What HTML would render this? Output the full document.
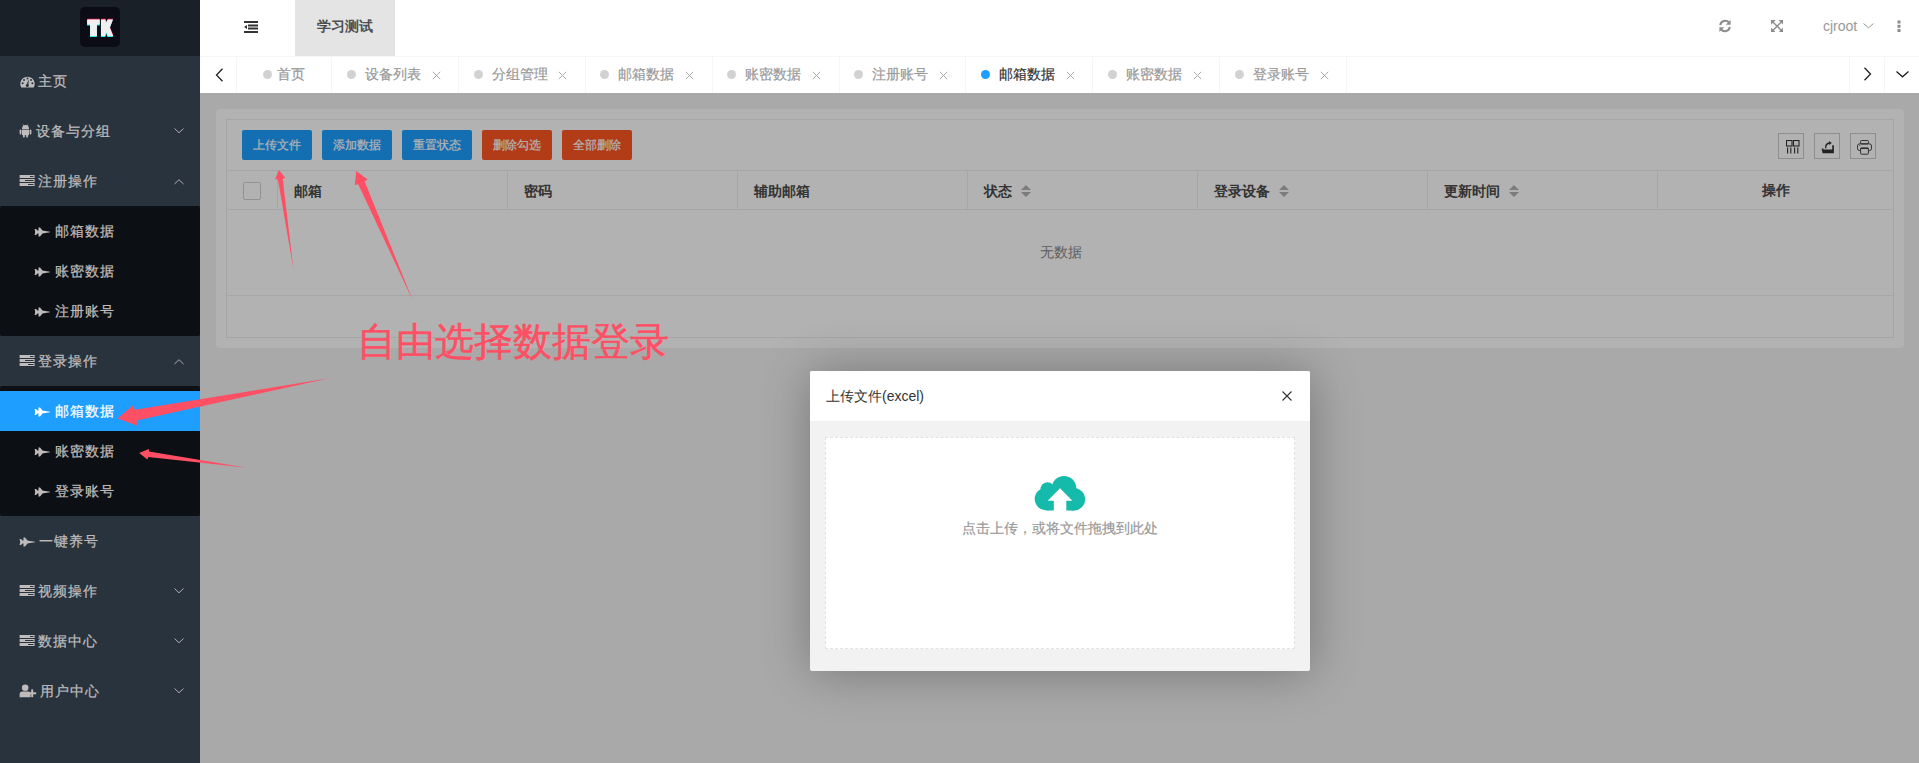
<!DOCTYPE html>
<html><head><meta charset="utf-8">
<style>
*{margin:0;padding:0;box-sizing:border-box}
html,body{width:1919px;height:763px;overflow:hidden;background:#f2f2f2;font-family:"Liberation Sans",sans-serif;font-size:14px;color:#333}
body div{-webkit-text-stroke:0.2px currentColor}
.abs{position:absolute;display:block}
#side{position:absolute;left:0;top:0;width:200px;height:763px;background:#28333E}
#logo{position:absolute;left:0;top:0;width:200px;height:56px;background:#192027}
.mi{position:absolute;left:0;width:200px;height:50px;line-height:50px;color:#bfbbbb;font-size:14px}
.mi span{-webkit-text-stroke:0.25px currentColor;letter-spacing:1px;position:absolute;left:38px;top:0}
.sub{position:absolute;left:0;width:200px;background:#0c0f13;border-radius:2px}
.si{position:absolute;left:0;width:200px;height:40px;line-height:40px;color:#bfbbbb}
.si span{-webkit-text-stroke:0.25px currentColor;letter-spacing:1px;position:absolute;left:54.5px;top:0}
.si.act{background:#1E9FFF;color:#fff}
#header{position:absolute;left:200px;top:0;width:1719px;height:56px;background:#fff}
#tabbar{position:absolute;left:200px;top:56px;width:1719px;height:37px;background:#fff;border-top:1px solid #f6f6f6}
.sep{position:absolute;top:0;width:1px;height:36px;background:#f6f6f6}
.tab{position:absolute;top:0;height:36px;line-height:36px;color:#999;white-space:nowrap}
.tab .dot{position:absolute;top:13px;left:0;width:9px;height:9px;border-radius:50%;background:#d2d2d2}
.tab .tx{position:absolute;top:-1px;left:18px}
#body{position:absolute;left:200px;top:93px;width:1719px;height:670px;background:#f2f2f2}
#card{position:absolute;left:15px;top:15px;width:1689px;height:240px;background:#fff;border-radius:4px}
#tbl{position:absolute;left:26px;top:27px;width:1668px;height:218px;border:1px solid #eee}
.btn{position:absolute;height:30px;width:70px;line-height:30px;text-align:center;color:#fff;font-size:12px;border-radius:2px;background:#1E9FFF}
.btn.red{background:#FF5722}
.tool{position:absolute;width:26px;height:26px;border:1px solid #ccc}
.th{position:absolute;top:50px;height:39px;line-height:39px;border-left:1px solid #eee;font-weight:bold;color:#333;white-space:nowrap}
#shade{position:absolute;left:200px;top:93px;width:1719px;height:670px;background:rgba(0,0,0,0.3)}
#modal{position:absolute;left:810px;top:371px;width:500px;height:300px;background:#f2f2f2;border-radius:2px;box-shadow:1px 1px 50px rgba(0,0,0,.3);overflow:hidden}
#mtitle{-webkit-text-stroke:0 !important;position:absolute;left:0;top:0;width:500px;height:51px;line-height:50px;background:#fff;padding-left:16px;color:#333;border-bottom:1px solid #f0f0f0}
#drag{position:absolute;left:15px;top:66px;width:470px;height:212px;background:#fff;border:1px dashed #e2e2e2}
</style></head><body>
<div id="side">
<div id="logo"><svg class="abs" style="left:0;top:0" width="200" height="56" viewBox="0 0 200 56"><rect x="80" y="7" width="40" height="40" rx="5" fill="#0b0c16"/><g transform="translate(0.2,-0.3)" fill="#fe2c55"><polygon points="87.15,19.15 99.7,19.15 99.7,24.3 96.9,24.3 96.9,35.8 90.1,35.8 90.1,24.3 87.15,24.3"/><polygon points="101,19.15 105.4,19.15 106.1,22.3 107.6,19.15 112.9,19.15 109.8,27.2 113.2,35.8 107.6,35.8 106.1,31.8 105.4,35.8 101,35.8"/></g><g transform="translate(-0.1,1.1)" fill="#25f4ee"><polygon points="87.15,19.15 99.7,19.15 99.7,24.3 96.9,24.3 96.9,35.8 90.1,35.8 90.1,24.3 87.15,24.3"/><polygon points="101,19.15 105.4,19.15 106.1,22.3 107.6,19.15 112.9,19.15 109.8,27.2 113.2,35.8 107.6,35.8 106.1,31.8 105.4,35.8 101,35.8"/></g><g transform="translate(0,0.3)" fill="#efefef"><polygon points="87.15,19.15 99.7,19.15 99.7,24.3 96.9,24.3 96.9,35.8 90.1,35.8 90.1,24.3 87.15,24.3"/><polygon points="101,19.15 105.4,19.15 106.1,22.3 107.6,19.15 112.9,19.15 109.8,27.2 113.2,35.8 107.6,35.8 106.1,31.8 105.4,35.8 101,35.8"/></g></svg></div>
<div class="mi" style="top:56px"><span>主页</span></div><svg class="abs" style="left:20px;top:76px" width="15" height="12" viewBox="0 0 15 12"><path d="M1.3 11.5 A7.2 7.2 0 1 1 13.7 11.5 Z" fill="#bfbbbb"/><circle cx="7.5" cy="2.6" r="1" fill="#28333E"/><circle cx="4" cy="4" r="1" fill="#28333E"/><circle cx="11" cy="4" r="1" fill="#28333E"/><circle cx="2.6" cy="7.2" r="1" fill="#28333E"/><circle cx="12.4" cy="7.2" r="1" fill="#28333E"/><path d="M6.4 9.5 L8.2 4.2 L8.8 4.4 L8.3 9.6Z" fill="#28333E"/><circle cx="7.3" cy="9.4" r="1.5" fill="#28333E"/></svg>
<div class="mi" style="top:106px"><span style="left:36px">设备与分组</span></div><svg class="abs" style="left:19px;top:124px" width="13" height="14" viewBox="0 0 13 14"><path d="M3 5 A3.5 4 0 0 1 10 5 Z" fill="#bfbbbb"/><path d="M4 0.6 L5 2 M9 0.6 L8 2" stroke="#bfbbbb" stroke-width="0.8"/><rect x="3" y="5.6" width="7" height="5.6" fill="#bfbbbb"/><rect x="0.6" y="5.6" width="1.8" height="4.8" rx="0.9" fill="#bfbbbb"/><rect x="10.6" y="5.6" width="1.8" height="4.8" rx="0.9" fill="#bfbbbb"/><rect x="4" y="10" width="1.8" height="3.6" rx="0.9" fill="#bfbbbb"/><rect x="7.2" y="10" width="1.8" height="3.6" rx="0.9" fill="#bfbbbb"/></svg><svg class="abs" style="left:174px;top:128px" width="10" height="6" viewBox="0 0 10 6"><path d="M0.5 0.5 L5.0 4.8 L9.5 0.5" fill="none" stroke="#bfbbbb" stroke-width="0.9"/></svg>
<div class="mi" style="top:156px"><span>注册操作</span></div><svg class="abs" style="left:19px;top:175px" width="16" height="12" viewBox="0 0 16 12"><rect x="0.6" y="0" width="15" height="3" fill="#bfbbbb"/><rect x="0.6" y="4" width="15" height="3" fill="#bfbbbb"/><rect x="0.6" y="8" width="15" height="3" fill="#bfbbbb"/><rect x="11" y="1" width="3.5" height="1" fill="#28333E"/><rect x="6" y="5" width="8.5" height="1" fill="#28333E"/><rect x="9" y="9" width="5.5" height="1" fill="#28333E"/></svg><svg class="abs" style="left:174px;top:179px" width="10" height="6" viewBox="0 0 10 6"><path d="M0.5 5 L5.0 0.7 L9.5 5" fill="none" stroke="#bfbbbb" stroke-width="0.9"/></svg>
<div class="sub" style="top:206px;height:130px"><div class="si" style="top:5px"><span>邮箱数据</span><svg class="abs" style="left:34px;top:16px" width="17" height="10" viewBox="0 0 17 10"><path d="M0.6 2 L2 2 L3.5 3.6 L4.5 3.6 L4.5 0.6 L6 0.6 L8.5 3.6 L9.5 3.8 L16 4.8 L16 5.2 L9.5 6.2 L8.5 6.4 L6 9.4 L4.5 9.4 L4.5 6.4 L3.5 6.4 L2 8 L0.6 8 L1.2 5 Z" fill="#bfbbbb"/></svg></div><div class="si" style="top:45px"><span>账密数据</span><svg class="abs" style="left:34px;top:16px" width="17" height="10" viewBox="0 0 17 10"><path d="M0.6 2 L2 2 L3.5 3.6 L4.5 3.6 L4.5 0.6 L6 0.6 L8.5 3.6 L9.5 3.8 L16 4.8 L16 5.2 L9.5 6.2 L8.5 6.4 L6 9.4 L4.5 9.4 L4.5 6.4 L3.5 6.4 L2 8 L0.6 8 L1.2 5 Z" fill="#bfbbbb"/></svg></div><div class="si" style="top:85px"><span>注册账号</span><svg class="abs" style="left:34px;top:16px" width="17" height="10" viewBox="0 0 17 10"><path d="M0.6 2 L2 2 L3.5 3.6 L4.5 3.6 L4.5 0.6 L6 0.6 L8.5 3.6 L9.5 3.8 L16 4.8 L16 5.2 L9.5 6.2 L8.5 6.4 L6 9.4 L4.5 9.4 L4.5 6.4 L3.5 6.4 L2 8 L0.6 8 L1.2 5 Z" fill="#bfbbbb"/></svg></div></div>
<div class="mi" style="top:336px"><span>登录操作</span></div><svg class="abs" style="left:19px;top:355px" width="16" height="12" viewBox="0 0 16 12"><rect x="0.6" y="0" width="15" height="3" fill="#bfbbbb"/><rect x="0.6" y="4" width="15" height="3" fill="#bfbbbb"/><rect x="0.6" y="8" width="15" height="3" fill="#bfbbbb"/><rect x="11" y="1" width="3.5" height="1" fill="#28333E"/><rect x="6" y="5" width="8.5" height="1" fill="#28333E"/><rect x="9" y="9" width="5.5" height="1" fill="#28333E"/></svg><svg class="abs" style="left:174px;top:359px" width="10" height="6" viewBox="0 0 10 6"><path d="M0.5 5 L5.0 0.7 L9.5 5" fill="none" stroke="#bfbbbb" stroke-width="0.9"/></svg>
<div class="sub" style="top:386px;height:130px"><div class="si act" style="top:5px"><span>邮箱数据</span><svg class="abs" style="left:34px;top:16px" width="17" height="10" viewBox="0 0 17 10"><path d="M0.6 2 L2 2 L3.5 3.6 L4.5 3.6 L4.5 0.6 L6 0.6 L8.5 3.6 L9.5 3.8 L16 4.8 L16 5.2 L9.5 6.2 L8.5 6.4 L6 9.4 L4.5 9.4 L4.5 6.4 L3.5 6.4 L2 8 L0.6 8 L1.2 5 Z" fill="#fff"/></svg></div><div class="si" style="top:45px"><span>账密数据</span><svg class="abs" style="left:34px;top:16px" width="17" height="10" viewBox="0 0 17 10"><path d="M0.6 2 L2 2 L3.5 3.6 L4.5 3.6 L4.5 0.6 L6 0.6 L8.5 3.6 L9.5 3.8 L16 4.8 L16 5.2 L9.5 6.2 L8.5 6.4 L6 9.4 L4.5 9.4 L4.5 6.4 L3.5 6.4 L2 8 L0.6 8 L1.2 5 Z" fill="#bfbbbb"/></svg></div><div class="si" style="top:85px"><span>登录账号</span><svg class="abs" style="left:34px;top:16px" width="17" height="10" viewBox="0 0 17 10"><path d="M0.6 2 L2 2 L3.5 3.6 L4.5 3.6 L4.5 0.6 L6 0.6 L8.5 3.6 L9.5 3.8 L16 4.8 L16 5.2 L9.5 6.2 L8.5 6.4 L6 9.4 L4.5 9.4 L4.5 6.4 L3.5 6.4 L2 8 L0.6 8 L1.2 5 Z" fill="#bfbbbb"/></svg></div></div>
<div class="mi" style="top:516px"><span style="left:39px">一键养号</span></div><svg class="abs" style="left:19px;top:537px" width="17" height="10" viewBox="0 0 17 10"><path d="M0.6 2 L2 2 L3.5 3.6 L4.5 3.6 L4.5 0.6 L6 0.6 L8.5 3.6 L9.5 3.8 L16 4.8 L16 5.2 L9.5 6.2 L8.5 6.4 L6 9.4 L4.5 9.4 L4.5 6.4 L3.5 6.4 L2 8 L0.6 8 L1.2 5 Z" fill="#bfbbbb"/></svg>
<div class="mi" style="top:566px"><span>视频操作</span></div><svg class="abs" style="left:19px;top:585px" width="16" height="12" viewBox="0 0 16 12"><rect x="0.6" y="0" width="15" height="3" fill="#bfbbbb"/><rect x="0.6" y="4" width="15" height="3" fill="#bfbbbb"/><rect x="0.6" y="8" width="15" height="3" fill="#bfbbbb"/><rect x="11" y="1" width="3.5" height="1" fill="#28333E"/><rect x="6" y="5" width="8.5" height="1" fill="#28333E"/><rect x="9" y="9" width="5.5" height="1" fill="#28333E"/></svg><svg class="abs" style="left:174px;top:588px" width="10" height="6" viewBox="0 0 10 6"><path d="M0.5 0.5 L5.0 4.8 L9.5 0.5" fill="none" stroke="#bfbbbb" stroke-width="0.9"/></svg>
<div class="mi" style="top:616px"><span>数据中心</span></div><svg class="abs" style="left:19px;top:635px" width="16" height="12" viewBox="0 0 16 12"><rect x="0.6" y="0" width="15" height="3" fill="#bfbbbb"/><rect x="0.6" y="4" width="15" height="3" fill="#bfbbbb"/><rect x="0.6" y="8" width="15" height="3" fill="#bfbbbb"/><rect x="11" y="1" width="3.5" height="1" fill="#28333E"/><rect x="6" y="5" width="8.5" height="1" fill="#28333E"/><rect x="9" y="9" width="5.5" height="1" fill="#28333E"/></svg><svg class="abs" style="left:174px;top:638px" width="10" height="6" viewBox="0 0 10 6"><path d="M0.5 0.5 L5.0 4.8 L9.5 0.5" fill="none" stroke="#bfbbbb" stroke-width="0.9"/></svg>
<div class="mi" style="top:666px"><span style="left:40px">用户中心</span></div><svg class="abs" style="left:19px;top:684px" width="19" height="14" viewBox="0 0 19 14"><circle cx="6.2" cy="3.8" r="3.3" fill="#bfbbbb"/><path d="M0.6 13.2 L0.6 10.6 Q0.6 7.6 3.6 7.6 L8.8 7.6 Q11 7.6 11.6 9 L11.6 13.2 Z" fill="#bfbbbb"/><rect x="12.2" y="5.4" width="2" height="7.8" fill="#bfbbbb"/><rect x="9.4" y="8.3" width="7.8" height="2" fill="#bfbbbb"/></svg><svg class="abs" style="left:174px;top:688px" width="10" height="6" viewBox="0 0 10 6"><path d="M0.5 0.5 L5.0 4.8 L9.5 0.5" fill="none" stroke="#bfbbbb" stroke-width="0.9"/></svg>
</div>
<div id="header">
<svg class="abs" style="left:44px;top:21px" width="15" height="12" viewBox="0 0 15 12"><rect x="0" y="0" width="14" height="2" fill="#333"/><rect x="4" y="3.5" width="10" height="2" fill="#333"/><rect x="4" y="6.5" width="10" height="2" fill="#333"/><rect x="0" y="10" width="14" height="2" fill="#333"/><path d="M0 6 L3 4 L3 8Z" fill="#333"/></svg>
<div class="abs" style="left:95px;top:0;width:100px;height:56px;background:#e4e4e4;line-height:52px;text-align:center;font-weight:bold;color:#4e4e4e;-webkit-text-stroke:0">学习测试</div>
<svg class="abs" style="left:1518px;top:19px" width="14" height="14" viewBox="0 0 14 14"><path d="M2.2 6.2 A5 5 0 0 1 11 3.6" fill="none" stroke="#8c8c8c" stroke-width="2"/><path d="M12.6 1 L12.6 5.8 L7.8 5.8Z" fill="#8c8c8c"/><path d="M11.8 7.8 A5 5 0 0 1 3 10.4" fill="none" stroke="#8c8c8c" stroke-width="2"/><path d="M1.4 13 L1.4 8.2 L6.2 8.2Z" fill="#8c8c8c"/></svg>
<svg class="abs" style="left:1570.5px;top:20px" width="12.3" height="12.3" viewBox="0 0 13 13"><path d="M0 0 L5 0 L0 5Z M13 0 L8 0 L13 5Z M0 13 L5 13 L0 8Z M13 13 L8 13 L13 8Z" fill="#8c8c8c"/><path d="M2 2 L11 11 M11 2 L2 11" stroke="#8c8c8c" stroke-width="1.5"/></svg>
<div class="abs" style="left:1623px;top:0;line-height:52px;color:#999;font-size:14px;-webkit-text-stroke:0">cjroot</div>
<svg class="abs" style="left:1663px;top:23px" width="11" height="6" viewBox="0 0 11 6"><path d="M0.5 0.5 L5.5 4.8 L10.5 0.5" fill="none" stroke="#999" stroke-width="1"/></svg>
<svg class="abs" style="left:1696.5px;top:20px" width="4" height="13" viewBox="0 0 4 13"><rect x="0.5" y="0.5" width="3" height="3" fill="#8c8c8c"/><rect x="0.5" y="4.8" width="3" height="3" fill="#8c8c8c"/><rect x="0.5" y="9" width="3" height="3" fill="#8c8c8c"/></svg>
</div>
<div id="tabbar">
<svg class="abs" style="left:15px;top:10.5px" width="9" height="14" viewBox="0 0 9 14"><path d="M7.5 0.8 L1.5 7 L7.5 13.2" fill="none" stroke="#222" stroke-width="1.3"/></svg>
<div class="sep" style="left:36px"></div>
<div class="sep" style="left:131px"></div>
<div class="sep" style="left:258px"></div>
<div class="sep" style="left:385px"></div>
<div class="sep" style="left:512px"></div>
<div class="sep" style="left:639px"></div>
<div class="sep" style="left:765px"></div>
<div class="sep" style="left:892px"></div>
<div class="sep" style="left:1019px"></div>
<div class="sep" style="left:1146px"></div>
<div class="sep" style="left:1649px"></div>
<div class="sep" style="left:1684px"></div>
<div class="tab" style="left:63px;color:#999"><div class="dot" style="background:#d2d2d2"></div><div class="tx" style="left:14px">首页</div></div>
<div class="tab" style="left:146.70px;color:#999"><div class="dot" style="background:#d2d2d2"></div><div class="tx" style="left:18px">设备列表</div></div>
<svg class="abs" style="left:231.60px;top:14px" width="9" height="9" viewBox="0 0 9 9"><path d="M0.8 0.8 L8.2 8.2 M8.2 0.8 L0.8 8.2" stroke="#aaa" stroke-width="1"/></svg>
<div class="tab" style="left:273.57px;color:#999"><div class="dot" style="background:#d2d2d2"></div><div class="tx" style="left:18px">分组管理</div></div>
<svg class="abs" style="left:358.48px;top:14px" width="9" height="9" viewBox="0 0 9 9"><path d="M0.8 0.8 L8.2 8.2 M8.2 0.8 L0.8 8.2" stroke="#aaa" stroke-width="1"/></svg>
<div class="tab" style="left:400.45px;color:#999"><div class="dot" style="background:#d2d2d2"></div><div class="tx" style="left:18px">邮箱数据</div></div>
<svg class="abs" style="left:485.35px;top:14px" width="9" height="9" viewBox="0 0 9 9"><path d="M0.8 0.8 L8.2 8.2 M8.2 0.8 L0.8 8.2" stroke="#aaa" stroke-width="1"/></svg>
<div class="tab" style="left:527.33px;color:#999"><div class="dot" style="background:#d2d2d2"></div><div class="tx" style="left:18px">账密数据</div></div>
<svg class="abs" style="left:612.23px;top:14px" width="9" height="9" viewBox="0 0 9 9"><path d="M0.8 0.8 L8.2 8.2 M8.2 0.8 L0.8 8.2" stroke="#aaa" stroke-width="1"/></svg>
<div class="tab" style="left:654.20px;color:#999"><div class="dot" style="background:#d2d2d2"></div><div class="tx" style="left:18px">注册账号</div></div>
<svg class="abs" style="left:739.10px;top:14px" width="9" height="9" viewBox="0 0 9 9"><path d="M0.8 0.8 L8.2 8.2 M8.2 0.8 L0.8 8.2" stroke="#aaa" stroke-width="1"/></svg>
<div class="tab" style="left:781.08px;color:#333"><div class="dot" style="background:#1E9FFF"></div><div class="tx" style="left:18px">邮箱数据</div></div>
<svg class="abs" style="left:865.97px;top:14px" width="9" height="9" viewBox="0 0 9 9"><path d="M0.8 0.8 L8.2 8.2 M8.2 0.8 L0.8 8.2" stroke="#aaa" stroke-width="1"/></svg>
<div class="tab" style="left:907.95px;color:#999"><div class="dot" style="background:#d2d2d2"></div><div class="tx" style="left:18px">账密数据</div></div>
<svg class="abs" style="left:992.85px;top:14px" width="9" height="9" viewBox="0 0 9 9"><path d="M0.8 0.8 L8.2 8.2 M8.2 0.8 L0.8 8.2" stroke="#aaa" stroke-width="1"/></svg>
<div class="tab" style="left:1034.83px;color:#999"><div class="dot" style="background:#d2d2d2"></div><div class="tx" style="left:18px">登录账号</div></div>
<svg class="abs" style="left:1119.72px;top:14px" width="9" height="9" viewBox="0 0 9 9"><path d="M0.8 0.8 L8.2 8.2 M8.2 0.8 L0.8 8.2" stroke="#aaa" stroke-width="1"/></svg>
<svg class="abs" style="left:1663px;top:10px" width="9" height="14" viewBox="0 0 9 14"><path d="M1.5 0.8 L7.5 7 L1.5 13.2" fill="none" stroke="#222" stroke-width="1.3"/></svg>
<svg class="abs" style="left:1696px;top:14px" width="13" height="7" viewBox="0 0 13 7"><path d="M0.5 0.5 L6.5 5.8 L12.5 0.5" fill="none" stroke="#222" stroke-width="1.3"/></svg>
</div>
<div id="body"></div>
<div class="abs" style="left:216px;top:109px;width:1688px;height:239px;background:#fff;border-radius:4px"></div>
<div class="abs" style="left:226px;top:119px;width:1668px;height:1px;background:#eee;"></div>
<div class="abs" style="left:226px;top:337px;width:1668px;height:1px;background:#eee;"></div>
<div class="abs" style="left:226px;top:119px;width:1px;height:219px;background:#eee;"></div>
<div class="abs" style="left:1893px;top:119px;width:1px;height:219px;background:#eee;"></div>
<div class="abs" style="left:226px;top:170px;width:1668px;height:1px;background:#eee;"></div>
<div class="abs" style="left:226px;top:209px;width:1668px;height:1px;background:#eee;"></div>
<div class="abs" style="left:226px;top:295px;width:1668px;height:1px;background:#eee;"></div>
<div class="abs" style="left:277px;top:171px;width:1px;height:38px;background:#eee;"></div>
<div class="abs" style="left:507px;top:171px;width:1px;height:38px;background:#eee;"></div>
<div class="abs" style="left:737px;top:171px;width:1px;height:38px;background:#eee;"></div>
<div class="abs" style="left:967px;top:171px;width:1px;height:38px;background:#eee;"></div>
<div class="abs" style="left:1197px;top:171px;width:1px;height:38px;background:#eee;"></div>
<div class="abs" style="left:1427px;top:171px;width:1px;height:38px;background:#eee;"></div>
<div class="abs" style="left:1657px;top:171px;width:1px;height:38px;background:#eee;"></div>
<div class="btn " style="left:242px;top:130px">上传文件</div>
<div class="btn " style="left:322px;top:130px">添加数据</div>
<div class="btn " style="left:402px;top:130px">重置状态</div>
<div class="btn red" style="left:482px;top:130px">删除勾选</div>
<div class="btn red" style="left:562px;top:130px">全部删除</div>
<div class="tool" style="left:1778px;top:133px"></div>
<div class="tool" style="left:1814px;top:133px"></div>
<div class="tool" style="left:1850px;top:133px"></div>
<div class="abs" style="left:243px;top:182px;width:18px;height:18px;border:1px solid #d2d2d2;border-radius:2px;background:#fff"></div>
<div class="abs" style="left:294px;top:172px;font-weight:bold;color:#4a4a4a;-webkit-text-stroke:0;line-height:38px">邮箱</div>
<div class="abs" style="left:524px;top:172px;font-weight:bold;color:#4a4a4a;-webkit-text-stroke:0;line-height:38px">密码</div>
<div class="abs" style="left:754px;top:172px;font-weight:bold;color:#4a4a4a;-webkit-text-stroke:0;line-height:38px">辅助邮箱</div>
<div class="abs" style="left:984px;top:172px;font-weight:bold;color:#4a4a4a;-webkit-text-stroke:0;line-height:38px">状态</div>
<div class="abs" style="left:1214px;top:172px;font-weight:bold;color:#4a4a4a;-webkit-text-stroke:0;line-height:38px">登录设备</div>
<div class="abs" style="left:1444px;top:172px;font-weight:bold;color:#4a4a4a;-webkit-text-stroke:0;line-height:38px">更新时间</div>
<div class="abs" style="left:1658px;top:171px;width:236px;text-align:center;font-weight:bold;color:#4a4a4a;-webkit-text-stroke:0;line-height:38px">操作</div>
<div class="abs" style="left:227px;top:210px;width:1668px;line-height:85px;text-align:center;color:#888;-webkit-text-stroke:0">无数据</div>
<svg class="abs" style="left:1786px;top:140px" width="14" height="14" viewBox="0 0 14 14"><rect x="0.5" y="0.5" width="5.5" height="5.5" fill="none" stroke="#333" stroke-width="1.1"/><rect x="7.5" y="0.5" width="5.5" height="5.5" fill="none" stroke="#333" stroke-width="1.1"/><path d="M1.6 7.4 V13.4 M4.8 7.4 V13.4 M8.6 7.4 V13.4 M11.8 7.4 V13.4" stroke="#333" stroke-width="1.1"/></svg>
<svg class="abs" style="left:1821px;top:140px" width="14" height="14" viewBox="0 0 14 14"><path d="M0.6 8.4 L2.4 8.4 L2.4 9.6 L11.2 9.6 L11.2 5.2 L12.9 5.2 L12.9 13.2 L1.6 13.2 Z" fill="#333"/><path d="M4.6 8.2 Q4.4 3.6 8.6 3.0" fill="none" stroke="#333" stroke-width="1.3"/><path d="M8.0 0.9 L10.8 2.9 L8.2 4.9 Z" fill="#333"/></svg>
<svg class="abs" style="left:1857px;top:140px" width="15" height="15" viewBox="0 0 15 15"><rect x="3.6" y="0.5" width="7.8" height="3.4" rx="0.8" fill="none" stroke="#333" stroke-width="0.9"/><rect x="0.5" y="3.9" width="14" height="6.6" rx="2" fill="none" stroke="#333" stroke-width="0.9"/><rect x="3.6" y="8" width="7.8" height="6.2" rx="0.8" fill="#fff" stroke="#333" stroke-width="0.9"/><rect x="3.6" y="7.8" width="7.8" height="1.1" fill="#333"/><rect x="2" y="5.3" width="1.5" height="0.9" fill="#999"/></svg>
<svg class="abs" style="left:1021px;top:185px" width="10" height="12" viewBox="0 0 10 12"><path d="M5 0 L10 5 L0 5Z M5 12 L10 7 L0 7Z" fill="#b2b2b2"/></svg>
<svg class="abs" style="left:1279px;top:185px" width="10" height="12" viewBox="0 0 10 12"><path d="M5 0 L10 5 L0 5Z M5 12 L10 7 L0 7Z" fill="#b2b2b2"/></svg>
<svg class="abs" style="left:1509px;top:185px" width="10" height="12" viewBox="0 0 10 12"><path d="M5 0 L10 5 L0 5Z M5 12 L10 7 L0 7Z" fill="#b2b2b2"/></svg>
<div id="shade"></div>
<div id="modal"><div id="mtitle">上传文件(excel)</div>
<svg class="abs" style="left:472px;top:20px" width="10" height="10" viewBox="0 0 10 10"><path d="M0.5 0.5 L9.5 9.5 M9.5 0.5 L0.5 9.5" stroke="#333" stroke-width="1.1"/></svg>
<div id="drag"></div>
<svg class="abs" style="left:0;top:0" width="500" height="300" viewBox="810 371 500 300"><g fill="#16baaa"><ellipse cx="1047" cy="499" rx="12.3" ry="11.5"/><circle cx="1047.5" cy="489.2" r="7"/><circle cx="1064" cy="488.2" r="12.3"/><circle cx="1073.7" cy="499.3" r="11.4"/><rect x="1047" y="489" width="26" height="21.5"/></g><path d="M1060 488.3 L1072.4 500.7 L1066.3 500.7 L1066.3 511 L1053.8 511 L1053.8 500.7 L1047.7 500.7Z" fill="#fff"/></svg>
<div class="abs" style="left:0;top:147px;width:500px;text-align:center;color:#999;line-height:20px">点击上传，或将文件拖拽到此处</div>
</div>
<svg class="abs" style="left:0;top:0" width="1919" height="763"><g fill="#ff4f64"><path d="M279.00 170.10 L275.19 179.35 L277.95 179.55 L293.40 269.00 L282.70 178.86 L285.29 177.88Z"/><path d="M356.30 171.00 L354.80 185.07 L358.25 184.22 L413.00 301.00 L364.67 181.43 L367.63 179.48Z"/><path d="M117.60 418.60 L137.01 425.39 L136.70 420.56 L329.20 378.30 L134.65 409.75 L133.16 405.15Z"/><path d="M139.20 453.00 L147.40 459.47 L148.35 456.97 L247.00 467.70 L149.08 451.62 L148.83 448.96Z"/></g></svg>
<div class="abs" style="left:357px;top:315px;font-size:39px;color:#ff4f64;-webkit-text-stroke:0.5px #ff4f64;white-space:nowrap">自由选择数据登录</div>
</body></html>
